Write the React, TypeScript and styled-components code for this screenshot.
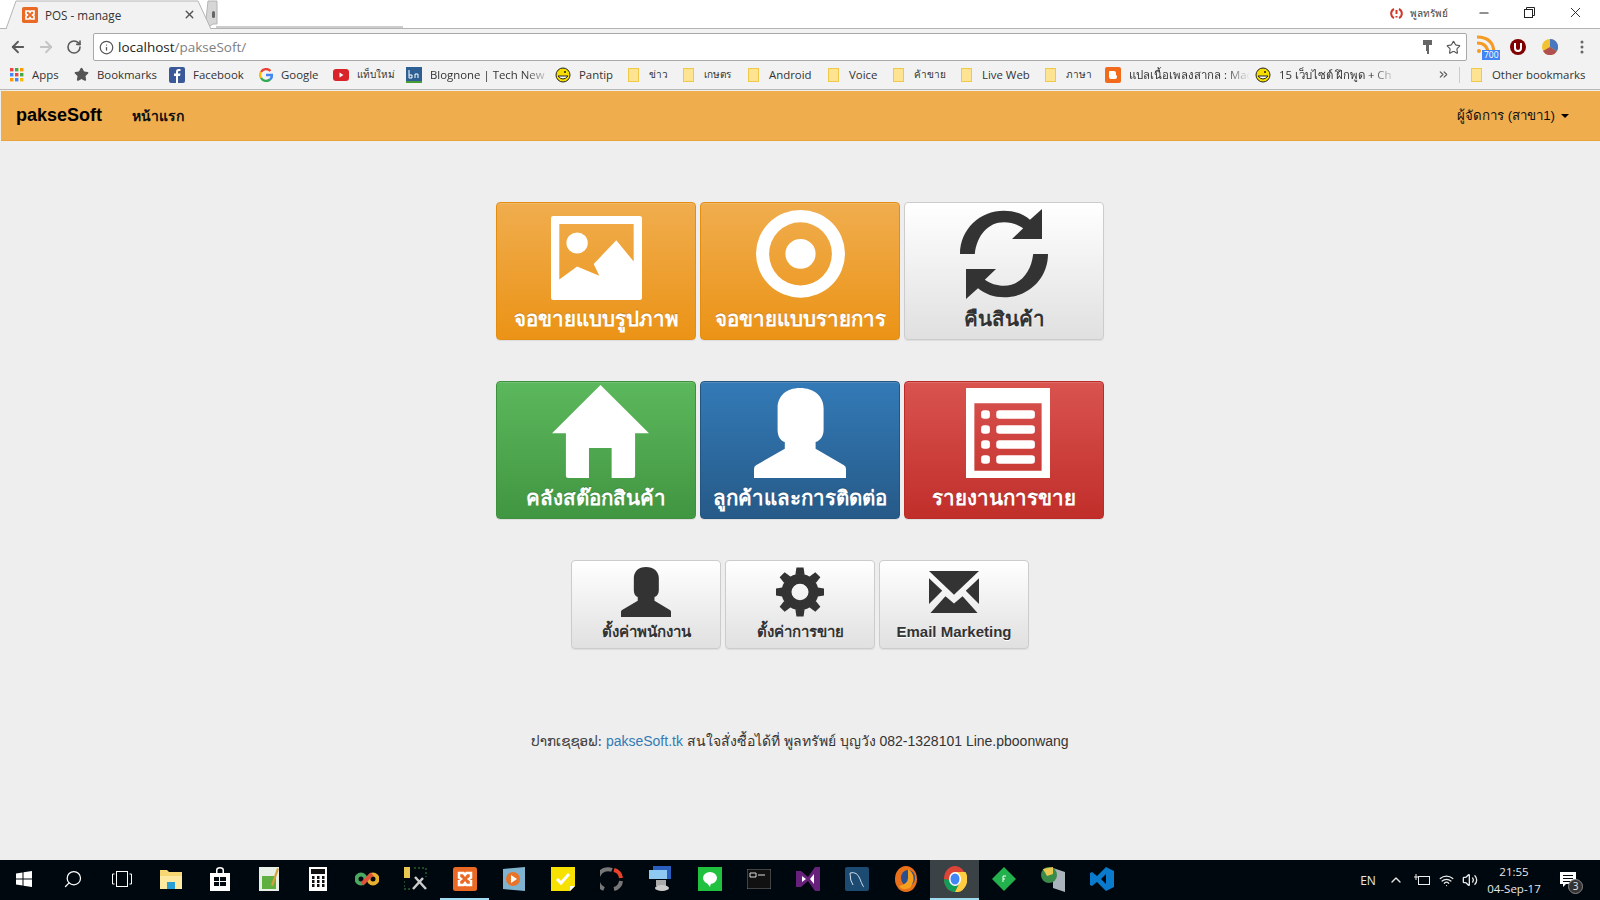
import React from "react";
import styled, { createGlobalStyle, css } from "styled-components";
import { ArrowLeft, ArrowRight, RotateCw, Info, Star, X, Minus, Search, ChevronUp, Volume2, Wifi, ChevronsRight } from "lucide-react";

const GlobalStyle = createGlobalStyle`
  html, body { margin: 0; padding: 0; background: #eee; }
  body { font-family: "Liberation Sans", Arial, sans-serif; font-size: 14px; color: #333; }
  * { box-sizing: border-box; }
`;

const UI_FONT = `"Open Sans", "Noto Sans", "Liberation Sans", sans-serif`;

const Page = styled.div`
  width: 1600px;
  height: 900px;
  display: flex;
  flex-direction: column;
  overflow: hidden;
`;

/* ---- browser chrome ---- */
const TitleBar = styled.div`
  height: 29px;
  background: #fff;
  border-bottom: 1px solid #b4b4b4;
  display: flex;
  align-items: stretch;
  padding: 0 2px 0 5px;
`;
const Tab = styled.div`
  position: relative;
  width: 206px;
  height: 29px;
  display: flex;
  align-items: center;
  padding: 0 15px 0 17px;
  font: 11.7px ${UI_FONT};
  color: #333;
  z-index: 1;
`;
const TabShape = styled.svg`
  position: absolute;
  left: 0;
  top: 0;
`;
const Favicon = styled.div`
  position: relative;
  width: 16px;
  height: 16px;
`;
const TabLabel = styled.span`
  position: relative;
  flex: 1;
  margin-left: 7px;
`;
const TabClose = styled(X)`
  position: relative;
  color: #555;
`;
const GhostTab = styled.div`
  width: 187px;
  height: 28px;
  margin-left: 5px;
  border-bottom: 2px solid #ccc;
`;
const TitleSpacer = styled.div`
  flex: 1;
`;
const UserChip = styled.div`
  display: flex;
  align-items: center;
  gap: 7px;
  font: 10px ${UI_FONT};
  color: #444;
  margin-right: 14px;
  padding-bottom: 2px;
`;
const WinButton = styled.div`
  width: 45.5px;
  display: flex;
  align-items: center;
  justify-content: center;
  color: #222;
  padding-bottom: 3px;
`;

const Toolbar = styled.div`
  height: 32px;
  background: #f2f2f2;
  display: flex;
  align-items: flex-start;
  padding: 4px 0 0 4px;
`;
const NavIcon = styled.div<{ $faded?: boolean }>`
  width: 28px;
  height: 28px;
  display: flex;
  align-items: center;
  justify-content: center;
  color: ${(p) => (p.$faded ? "#c4c4c4" : "#5a5a5a")};
`;
const Omnibox = styled.div`
  width: 1374px;
  height: 28px;
  margin-left: 5px;
  background: #fff;
  border: 1px solid #a9a9a9;
  border-radius: 2px;
  display: flex;
  align-items: center;
  padding: 0 5px 0 5px;
  font: 13.500px ${UI_FONT};
  color: #222;
`;
const Url = styled.span`
  flex: 1;
  margin-left: 4px;
`;
const UrlPath = styled.span`
  color: #808080;
`;
const OmniIcons = styled.div`
  display: flex;
  align-items: center;
  gap: 14px;
  color: #555;
`;
const Extensions = styled.div`
  flex: 1;
  height: 28px;
  display: flex;
  align-items: center;
  padding-left: 3px;
`;
const ExtSlot = styled.div`
  width: 32px;
  display: flex;
  align-items: center;
  justify-content: center;
`;
const RssBadge = styled.div`
  position: relative;
  width: 20px;
  height: 24px;
`;
const Badge = styled.span`
  position: absolute;
  right: -4px;
  bottom: -1px;
  background: #4285f4;
  color: #fff;
  font: 8.500px ${UI_FONT};
  line-height: 10px;
  padding: 0 1.500px;
`;

const BookmarkBar = styled.div`
  height: 29px;
  background: #f2f2f2;
  border-bottom: 1px solid #b8b8b8;
  display: flex;
  align-items: center;
  padding: 0 0 1px 10px;
  font: 11.400px ${UI_FONT};
  color: #333;
`;
const Mark = styled.div<{ $w: number; $fade?: boolean; $tiny?: boolean }>`
  width: ${(p) => p.$w}px;
  flex: none;
  display: flex;
  align-items: center;
  gap: 8px;
  white-space: nowrap;
  overflow: hidden;
  font-size: ${(p) => (p.$tiny ? 10 : 11.4)}px;
  ${(p) =>
    p.$fade &&
    css`
      mask-image: linear-gradient(to right, #000 80%, transparent 97%);
    `}
`;
const FolderGlyph = styled.i`
  flex: none;
  width: 11px;
  height: 14px;
  margin-right: 2px;
  background: #fde392;
  border: 1px solid #f0c948;
`;
const OverflowChevron = styled(ChevronsRight)`
  flex: none;
  margin-left: 36px;
  color: #555;
`;
const Divider = styled.div`
  width: 1px;
  height: 16px;
  background: #ccc;
  margin: 0 11px 0 9px;
`;

/* ---- page navbar ---- */
const Navbar = styled.nav`
  height: 50px;
  margin: 1px 0 0 1px;
  background: #f0ad4e;
  border-bottom: 1px solid #e8a33f;
  display: flex;
  align-items: center;
  color: #111;
  padding: 0 31px 0 15px;
`;
const Brand = styled.a`
  font-size: 18px;
  font-weight: bold;
  color: #000;
`;
const NavLink = styled.a`
  font-size: 14px;
  font-weight: bold;
  margin-left: 30px;
`;
const NavRight = styled.a`
  margin-left: auto;
  display: flex;
  align-items: center;
  gap: 6px;
  font-size: 13.300px;
`;
const Caret = styled.i`
  width: 0;
  height: 0;
  border-top: 4px solid #000;
  border-left: 4px solid transparent;
  border-right: 4px solid transparent;
`;

/* ---- main ---- */
const Main = styled.main`
  flex: 1;
  display: flex;
  flex-direction: column;
  align-items: center;
  padding-top: 61px;
`;
const Row = styled.div<{ $gap: number; $mb: number }>`
  display: flex;
  gap: ${(p) => p.$gap}px;
  margin-bottom: ${(p) => p.$mb}px;
`;

type Tone = "warning" | "success" | "primary" | "danger" | "default";
const tones: Record<Tone, ReturnType<typeof css>> = {
  warning: css`
    background: linear-gradient(#f0ad4e, #eb9316);
    border-color: #e38d13;
  `,
  success: css`
    background: linear-gradient(#5cb85c, #419641);
    border-color: #3e8f3e;
  `,
  primary: css`
    background: linear-gradient(#337ab7, #265a88);
    border-color: #245580;
  `,
  danger: css`
    background: linear-gradient(#d9534f, #c12e2a);
    border-color: #b92c28;
  `,
  default: css`
    background: linear-gradient(#fff, #e0e0e0);
    border-color: #ccc;
    color: #333;
    text-shadow: 0 1px 0 #fff;
  `,
};

const Tile = styled.a<{ $tone: Tone; $small?: boolean }>`
  width: ${(p) => (p.$small ? 149.5 : 200)}px;
  height: ${(p) => (p.$small ? 89 : 138)}px;
  border: 1px solid;
  border-radius: 4px;
  display: flex;
  flex-direction: column;
  align-items: center;
  color: #fff;
  font-weight: bold;
  font-size: ${(p) => (p.$small ? 15 : 20.5)}px;
  text-shadow: 0 -1px 0 rgba(0, 0, 0, 0.2);
  box-shadow: inset 0 1px 0 rgba(255, 255, 255, 0.15), 0 1px 1px rgba(0, 0, 0, 0.075);
  ${(p) => tones[p.$tone]}
`;
const IconSlot = styled.div<{ $small?: boolean; $top: number; $shift?: number }>`
  height: ${(p) => (p.$small ? 60 : 105)}px;
  padding-top: ${(p) => p.$top}px;
  padding-left: ${(p) => p.$shift ?? 0}px;
  display: flex;
  align-items: flex-start;
  justify-content: center;
`;
const TileText = styled.span`
  white-space: nowrap;
  line-height: 22px;
`;

const Footer = styled.p`
  margin: 0;
  margin-top: 82px;
  font-size: 14px;
  line-height: 20px;
`;
const Lao = styled.span`
  font-family: "DejaVu Sans", sans-serif;
  font-size: 13.500px;
  color: #444;
`;
const FooterLink = styled.a`
  color: #337ab7;
`;

/* ---- taskbar ---- */
const Taskbar = styled.div`
  height: 40px;
  margin-left: -1px;
  background: #00080f;
  display: flex;
  align-items: stretch;
  color: #fff;
`;
const TaskItem = styled.div<{ $active?: boolean; $running?: boolean }>`
  width: 49px;
  flex: none;
  display: flex;
  align-items: center;
  justify-content: center;
  background: ${(p) => (p.$active ? "#3a4246" : "transparent")};
  border-bottom: 2px solid ${(p) => (p.$active || p.$running ? "#9fdcf2" : "transparent")};
`;
const SearchGlyph = styled(Search)`
  transform: scaleX(-1);
`;
const Tray = styled.div`
  margin-left: auto;
  display: flex;
  align-items: center;
  font: 12px ${UI_FONT};
  color: #e8e8e8;
`;
const TrayItem = styled.div<{ $w: number }>`
  width: ${(p) => p.$w}px;
  display: flex;
  align-items: center;
  justify-content: center;
`;
const Clock = styled.div`
  width: 68px;
  text-align: center;
  line-height: 17px;
  font-size: 11.500px;
`;
const Notify = styled.div`
  position: relative;
  width: 40px;
  margin-right: 12px;
  display: flex;
  justify-content: center;
`;
const NotifyCount = styled.span`
  position: absolute;
  right: 5px;
  bottom: -6px;
  width: 15px;
  height: 15px;
  border-radius: 50%;
  background: #333;
  border: 1px solid #888;
  font-size: 10px;
  line-height: 13px;
  text-align: center;
`;

/* ---- glyphs ---- */
const PictureIcon = () => (
  <svg width={91} height={84} viewBox="0 0 230 249" fill="#fff" preserveAspectRatio="none">
    <path
      fillRule="evenodd"
      d="M6 0H224Q230 0 230 6V243Q230 249 224 249H6Q0 249 0 243V6Q0 0 6 0ZM21 24V188L66 150L122 177L108 142L165 72L209 135V24ZM39 80A27 31 0 1 0 93 80A27 31 0 1 0 39 80Z"
    />
  </svg>
);
const RecordIcon = () => (
  <svg width={89} height={88} viewBox="0 0 224 265" fill="#fff" preserveAspectRatio="none">
    <path
      fillRule="evenodd"
      d="M0 132A112 132 0 1 0 224 132A112 132 0 1 0 0 132ZM33 132A79 95 0 1 1 191 132A79 95 0 1 1 33 132ZM74 132A38 45 0 1 0 150 132A38 45 0 1 0 74 132Z"
    />
  </svg>
);
const refreshHalf = "M0 135C0 60 50 5 110 5C135 5 158 15 175 32L205 0V90H130L158 58C145 47 128 40 110 40C70 40 42 80 37 135Z";
const RefreshIcon = () => (
  <svg width={88} height={90} viewBox="0 0 220 270" fill="#333" preserveAspectRatio="none">
    <path d={refreshHalf} />
    <path transform="rotate(180 110 135)" d={refreshHalf} />
  </svg>
);
const HomeIcon = () => (
  <svg width={97} height={93} viewBox="0 0 244 278" fill="#fff" preserveAspectRatio="none">
    <path d="M122 0L244 144H209V272Q209 278 203 278H150V188H93V278H41Q35 278 35 272V144H0Z" />
  </svg>
);
const UserIcon = ({ w = 92, h = 90, fill = "#fff" }: { w?: number; h?: number; fill?: string }) => (
  <svg width={w} height={h} viewBox="0 0 230 270" fill={fill} preserveAspectRatio="none">
    <path d="M115 0C150 0 174 25 174 60V125C174 145 165 158 154 162V182L225 232Q230 236 230 242V270H0V242Q0 236 5 232L77 182V162C66 158 59 145 59 125V60C59 25 80 0 115 0Z" />
  </svg>
);
const ListIcon = () => (
  <svg width={84} height={90} viewBox="0 0 211 270" fill="#fff" preserveAspectRatio="none">
    <path
      fillRule="evenodd"
      d="M0 0H211V270H0ZM21 46V248H190V46ZM38 75Q38 67 46 67H52Q60 67 60 75V84Q60 92 52 92H46Q38 92 38 84ZM76 75Q76 67 84 67H165Q173 67 173 75V84Q173 92 165 92H84Q76 92 76 84ZM38 120Q38 112 46 112H52Q60 112 60 120V129Q60 137 52 137H46Q38 137 38 129ZM76 120Q76 112 84 112H165Q173 112 173 120V129Q173 137 165 137H84Q76 137 76 129ZM38 165Q38 157 46 157H52Q60 157 60 165V174Q60 182 52 182H46Q38 182 38 174ZM76 165Q76 157 84 157H165Q173 157 173 165V174Q173 182 165 182H84Q76 182 76 174ZM38 210Q38 202 46 202H52Q60 202 60 210V219Q60 227 52 227H46Q38 227 38 219ZM76 210Q76 202 84 202H165Q173 202 173 210V219Q173 227 165 227H84Q76 227 76 219Z"
    />
  </svg>
);
const CogIcon = () => (
  <svg width={48} height={50} viewBox="0 0 135 145" fill="#333" preserveAspectRatio="none">
    <g transform="translate(67.5 72.5)">
      <circle r="38" fill="none" stroke="#333" strokeWidth="28" />
      {[0, 45, 90, 135, 180, 225, 270, 315].map((a) => (
        <path key={a} transform={`rotate(${a})`} d="M-13 -50L-10 -71H10L13 -50Z" />
      ))}
    </g>
  </svg>
);
const EnvelopeIcon = () => (
  <svg width={50} height={42} viewBox="0 0 140 127" fill="#333" preserveAspectRatio="none">
    <path d="M0 0H140L70 72Z" />
    <path d="M0 22V100L37 60Z" />
    <path d="M140 22V100L103 60Z" />
    <path d="M4 127L46 76L70 98L94 76L136 127Z" />
  </svg>
);
const XamppIcon = ({ size }: { size: number }) => (
  <svg width={size} height={size} viewBox="0 0 24 24">
    <rect width="24" height="24" rx="2.500" fill="#ea6a25" />
    <path d="M6 6H10.500L12 8L13.500 6H18V10.500L16 12L18 13.500V18H13.500L12 16L10.500 18H6V13.500L8 12L6 10.500Z" fill="none" stroke="#fff" strokeWidth="2.500" />
  </svg>
);

const Tile3 = [
  { tone: "warning" as Tone, icon: <PictureIcon />, top: 13, label: "จอขายแบบรูปภาพ" },
  { tone: "warning" as Tone, icon: <RecordIcon />, top: 7, label: "จอขายแบบรายการ" },
  { tone: "default" as Tone, icon: <RefreshIcon />, top: 6, label: "คืนสินค้า" },
];
const Tile4 = [
  { tone: "success" as Tone, icon: <HomeIcon />, top: 3, shift: 8, label: "คลังสต๊อกสินค้า" },
  { tone: "primary" as Tone, icon: <UserIcon />, top: 6, label: "ลูกค้าและการติดต่อ" },
  { tone: "danger" as Tone, icon: <ListIcon />, top: 6, shift: 8, label: "รายงานการขาย" },
];
const Tile5 = [
  { icon: <UserIcon w={50} h={50} fill="#333" />, top: 6, label: "ตั้งค่าพนักงาน" },
  { icon: <CogIcon />, top: 6, label: "ตั้งค่าการขาย" },
  { icon: <EnvelopeIcon />, top: 10, label: "Email Marketing" },
];

const Folder = () => <FolderGlyph />;
const Smile = () => (
  <svg width={16} height={16} viewBox="0 0 16 16">
    <circle cx="8" cy="8" r="7" fill="#f7dc00" stroke="#222" />
    <path d="M3 9Q8 15 13 9Z" fill="#fff" stroke="#222" />
    <circle cx="10" cy="5" r="1" fill="#222" />
  </svg>
);
const Square = ({ c, t }: { c: string; t?: string }) => (
  <svg width={16} height={16} viewBox="0 0 16 16">
    <rect width="16" height="16" rx="2" fill={c} />
    {t && <path d={t} fill="#fff" />}
  </svg>
);
const BlognoneIcon = () => (
  <svg width={16} height={16} viewBox="0 0 16 16">
    <rect width="16" height="16" fill="#2e5f92" />
    <rect y="14" width="16" height="2" fill="#4a9a3a" />
    <path d="M3 3V11H6V8H3M9 11V7H12V11" fill="none" stroke="#fff" />
  </svg>
);

const bookmarks: { w: number; icon: React.ReactNode; label: string; fade?: boolean; tiny?: boolean }[] = [
  { w: 64, icon: (
      <svg width={14} height={14} viewBox="0 0 14 14">
        {[0, 5, 10].flatMap((y, r) =>
          [0, 5, 10].map((x, c) => (
            <rect key={`${r}${c}`} x={x} y={y} width="3.4" height="3.4" fill={["#e44", "#4a4", "#f90", "#48f", "#e44", "#4a4", "#f90", "#48f", "#fb0"][r * 3 + c]} />
          ))
        )}
      </svg>
    ), label: "Apps" },
  { w: 95, icon: <Star size={15} fill="#555" color="#555" />, label: "Bookmarks" },
  { w: 90, icon: <Square c="#3b5998" t="M9 16V9H11L11.5 6.5H9V5Q9 4 10 4H11.5V2H9.500Q7 2 7 5V6.500H5V9H7V16Z" />, label: "Facebook" },
  { w: 74, icon: (
      <svg width={14} height={14} viewBox="0 0 14 14" fill="none" strokeWidth="2.4">
        <path d="M11.500 3A6 6 0 0 0 2 4" stroke="#ea4335" />
        <path d="M2 4A6 6 0 0 0 2 10" stroke="#fbbc05" />
        <path d="M2 10A6 6 0 0 0 11 11.500" stroke="#34a853" />
        <path d="M11 11.500Q13 10 13 7H7" stroke="#4285f4" />
      </svg>
    ), label: "Google" },
  { w: 73, icon: <svg width={16} height={12} viewBox="0 0 16 12"><rect width="16" height="12" rx="3" fill="#d9252a" /><path d="M6.500 3.500L10.500 6L6.500 8.500Z" fill="#fff" /></svg>, label: "แท็บใหม่", tiny: true },
  { w: 149, icon: <BlognoneIcon />, label: "Blognone | Tech New", fade: true },
  { w: 73, icon: <Smile />, label: "Pantip" },
  { w: 55, icon: <Folder />, label: "ข่าว", tiny: true },
  { w: 65, icon: <Folder />, label: "เกษตร", tiny: true },
  { w: 80, icon: <Folder />, label: "Android" },
  { w: 65, icon: <Folder />, label: "Voice" },
  { w: 68, icon: <Folder />, label: "ค้าขาย", tiny: true },
  { w: 84, icon: <Folder />, label: "Live Web" },
  { w: 60, icon: <Folder />, label: "ภาษา", tiny: true },
  { w: 150, icon: <Square c="#f26b1d" t="M5 4H9Q11 4 11 6V8Q12 8 12 10Q12 12 10 12H6Q4 12 4 10V5Q4 4 5 4Z" />, label: "แปลเนื้อเพลงสากล : Mac", fade: true },
  { w: 146, icon: <Smile />, label: "15 เว็บไซต์ ฝึกพูด + Ch", fade: true },
];

const taskIcons: React.ReactNode[] = [
  <svg width={16} height={16} viewBox="0 0 16 16" fill="#fff"><path d="M0 2.500L6.500 1.500V7.500H0ZM7.500 1.300L16 0V7.500H7.500ZM0 8.500H6.500V14.500L0 13.500ZM7.500 8.500H16V16L7.500 14.700Z" /></svg>,
  <SearchGlyph size={20} strokeWidth={1.5} />,
  <svg width={20} height={16} viewBox="0 0 20 16" fill="none" stroke="#fff"><rect x="4.500" y="0.500" width="11" height="15" /><path d="M2.500 3H0.500V13H2.500M17.500 3H19.500V13H17.500" /></svg>,
  <svg width={22} height={24} viewBox="0 0 22 24"><path d="M0 3H7L9 5H22V22H0Z" fill="#f7d774" /><rect y="9" width="22" height="13" fill="#fde9a0" /><rect x="7" y="15" width="8" height="7" fill="#2a9fd6" /></svg>,
  <svg width={20} height={24} viewBox="0 0 20 24" fill="#fff"><path d="M0 6H20V24H0ZM6 6V3Q6 0 10 0Q14 0 14 3V6H12.500V3Q12.500 1.500 10 1.500Q7.500 1.500 7.500 3V6Z" /><path d="M4 10H9V14H4ZM10 10H16V14H10ZM4 15H9V19H4ZM10 15H16V19H10Z" fill="#00080f" /></svg>,
  <svg width={20} height={24} viewBox="0 0 20 24"><rect width="20" height="24" fill="#e8efe6" /><rect x="3" y="9" width="14" height="13" fill="#5fb040" /><path d="M12 18L18 1L20 2L14 19Z" fill="#d8a23a" /></svg>,
  <svg width={18} height={24} viewBox="0 0 18 24"><rect width="18" height="24" fill="#fff" /><rect x="2" y="2" width="14" height="5" fill="#111" />{[9, 13, 17].flatMap((y) => [3, 8, 13].map((x) => <rect key={`${x}${y}`} x={x} y={y} width="2.500" height="3" fill="#111" />))}</svg>,
  <svg width={24} height={16} viewBox="0 0 24 16" fill="none" strokeWidth="4"><circle cx="6" cy="8" r="4.500" stroke="#4aa860" /><circle cx="18" cy="8" r="4.500" stroke="#e8b030" /><path d="M7 13L17 3" stroke="#e0503a" /></svg>,
  <svg width={24} height={24} viewBox="0 0 24 24"><rect width="6" height="11" fill="#e8c850" /><path d="M10 1H22V10M0 14V22H6" fill="none" stroke="#3a8a3a" strokeDasharray="2 2" /><path d="M9 22L19 11M11 10L22 22" stroke="#ccc" strokeWidth="2.500" /></svg>,
  <XamppIcon size={24} />,
  <svg width={22} height={24} viewBox="0 0 22 24"><path d="M0 2L22 0V24L0 22Z" fill="#7fb3d0" /><circle cx="10" cy="12" r="7" fill="#e8742a" /><path d="M8 8L14 12L8 16Z" fill="#fff" /></svg>,
  <svg width={24} height={24} viewBox="0 0 24 24"><path d="M0 0H24V19L19 24H0Z" fill="#f7e100" /><path d="M6 12L10 16L18 7" fill="none" stroke="#fff" strokeWidth="3" /><path d="M19 24V19H24Z" fill="#fff" /></svg>,
  <svg width={24} height={24} viewBox="0 0 24 24" fill="none"><path d="M4 22A10 10 0 0 1 12 3" stroke="#777" strokeWidth="4" /><path d="M14 3A9 9 0 0 1 21 11" stroke="#e8432a" strokeWidth="4" /><path d="M21 14A9 9 0 0 1 14 22" stroke="#777" strokeWidth="4" /></svg>,
  <svg width={24} height={26} viewBox="0 0 24 26"><rect x="4" y="0" width="18" height="13" fill="#2a5fc0" /><rect x="0" y="4" width="18" height="9" fill="#8fc8f0" /><rect x="7" y="14" width="10" height="6" fill="#aaa" /><ellipse cx="13" cy="22" rx="7" ry="3" fill="#ccc" /></svg>,
  <svg width={24} height={24} viewBox="0 0 24 24"><rect width="24" height="24" fill="#1fc13e" /><ellipse cx="12" cy="11" rx="7" ry="6" fill="#fff" /><path d="M9 16L12 20L13 16Z" fill="#fff" /></svg>,
  <svg width={24} height={20} viewBox="0 0 24 20"><rect width="24" height="20" fill="#111" stroke="#777" /><path d="M3 4H9V8H3ZM11 6H18" stroke="#ddd" fill="none" /></svg>,
  <svg width={24} height={24} viewBox="0 0 24 24"><path d="M0 4H5L12 10L19 0H24V24H19L12 14L5 20H0Z" fill="#68217a" /><path d="M6 9L10 12L6 15Z M18 7V17L14 12Z" fill="#fff" /></svg>,
  <svg width={24} height={24} viewBox="0 0 24 24"><rect width="24" height="24" rx="2" fill="#1d4a70" /><path d="M5 6Q12 4 15 12T19 20M5 6Q5 14 8 18" fill="none" stroke="#cde" /></svg>,
  <svg width={24} height={26} viewBox="0 0 24 26"><ellipse cx="12" cy="13" rx="11" ry="13" fill="#e8701a" /><ellipse cx="14" cy="12" rx="7" ry="8" fill="#2a4f90" /><path d="M14 3Q24 10 16 22Q8 25 5 20Q14 18 14 12Z" fill="#f4a01e" /></svg>,
  <svg width={24} height={26} viewBox="0 0 24 26"><ellipse cx="12" cy="13" rx="11" ry="13" fill="#db4437" /><path d="M1 13A11 13 0 0 0 12 26L17 16Z" fill="#0f9d58" /><path d="M12 6H22.500A11 13 0 0 1 12 26L17 16Z" fill="#ffcd40" /><ellipse cx="12" cy="13" rx="6" ry="7" fill="#fff" /><ellipse cx="12" cy="13" rx="4.500" ry="5.500" fill="#4285f4" /></svg>,
  <svg width={24} height={24} viewBox="0 0 24 24"><path d="M12 0L24 12L12 24L0 12Z" fill="#22b14c" /><path d="M11 9H14M11 9V15M11 12H13" stroke="#fff" /></svg>,
  <svg width={24} height={26} viewBox="0 0 24 26"><path d="M12 2L24 6V26L12 22Z" fill="#aab4bc" /><circle cx="8" cy="9" r="8" fill="#3a8a4a" /><path d="M2 3L12 1V8L6 10Z" fill="#e8c850" /></svg>,
  <svg width={24} height={24} viewBox="0 0 24 24"><path d="M16 0L24 4V20L16 24L7 15L2 19L0 18V6L2 5L7 9ZM16 7L11 12L16 17Z" fill="#0a7acc" /></svg>,
];

export default function App() {
  return (
    <Page>
      <GlobalStyle />
      <TitleBar>
        <Tab>
          <TabShape width={216} height={29} viewBox="0 0 216 29">
            <path d="M200 29L203 1H212V24H208Z" fill="#d6d6d6" stroke="#b4b4b4" />
            <rect x="207" y="11" width="3" height="7" rx="1.500" fill="#666" />
            <path d="M1 29L11 1H193L206 29" fill="#f2f2f2" stroke="#b4b4b4" />
          </TabShape>
          <Favicon>
            <XamppIcon size={16} />
          </Favicon>
          <TabLabel>POS - manage</TabLabel>
          <TabClose size={13} strokeWidth={2.5} />
        </Tab>
        <GhostTab />
        <TitleSpacer />
        <UserChip>
          <svg width={13} height={13} viewBox="0 0 13 13" fill="none" stroke="#d0392b" strokeWidth="2">
            <path d="M4 2A5 5 0 0 0 4 11M9 2A5 5 0 0 1 9 11M6.500 3V7M6.500 9V10.500" />
          </svg>
          พูลทรัพย์
        </UserChip>
        <WinButton><Minus size={14} /></WinButton>
        <WinButton>
          <svg width={11} height={11} viewBox="0 0 11 11" fill="none" stroke="#222"><rect x="0.500" y="2.500" width="8" height="8" /><path d="M2.500 2.500V0.500H10.500V8.500H8.500" /></svg>
        </WinButton>
        <WinButton><X size={17} strokeWidth={1.3} /></WinButton>
      </TitleBar>
      <Toolbar>
        <NavIcon><ArrowLeft size={18} strokeWidth={2.4} /></NavIcon>
        <NavIcon $faded><ArrowRight size={18} strokeWidth={2.4} /></NavIcon>
        <NavIcon><RotateCw size={16} strokeWidth={2.4} /></NavIcon>
        <Omnibox>
          <Info size={15} color="#555" />
          <Url>localhost<UrlPath>/pakseSoft/</UrlPath></Url>
          <OmniIcons>
            <svg width={9} height={14} viewBox="0 0 9 14" fill="#666"><path d="M0 0H9V5H6V14H4V11H3V5H0Z" /></svg>
            <Star size={15} strokeWidth={1.8} />
          </OmniIcons>
        </Omnibox>
        <Extensions>
          <ExtSlot>
            <RssBadge>
              <svg width={20} height={20} viewBox="0 0 20 20" fill="none" stroke="#f59a23" strokeWidth="3"><path d="M1 8Q12 8 12 19M1 2Q18 2 18 19" /><circle cx="3" cy="16" r="2" fill="#f59a23" stroke="none" /></svg>
              <Badge>700</Badge>
            </RssBadge>
          </ExtSlot>
          <ExtSlot>
            <svg width={16} height={16} viewBox="0 0 16 16"><circle cx="8" cy="8" r="8" fill="#800000" /><path d="M5 4V9Q5 12 8 12Q11 12 11 9V4" fill="none" stroke="#fff" strokeWidth="2" /></svg>
          </ExtSlot>
          <ExtSlot>
            <svg width={16} height={16} viewBox="0 0 16 16"><circle cx="8" cy="8" r="8" fill="#f1c232" /><path d="M8 8L1 12A8 8 0 0 0 15 12Z" fill="#b05050" /><path d="M8 8V0A8 8 0 0 1 15 12Z" fill="#4a78c0" /></svg>
          </ExtSlot>
          <ExtSlot>
            <svg width={4} height={14} viewBox="0 0 4 14" fill="#666"><circle cx="2" cy="2" r="1.500" /><circle cx="2" cy="7" r="1.500" /><circle cx="2" cy="12" r="1.500" /></svg>
          </ExtSlot>
        </Extensions>
      </Toolbar>
      <BookmarkBar>
        {bookmarks.map((b) => (
          <Mark key={b.label} $w={b.w} $fade={b.fade} $tiny={b.tiny}>
            {b.icon}
            <span>{b.label}</span>
          </Mark>
        ))}
        <OverflowChevron size={13} />
        <Divider />
        <Mark $w={120}>
          <Folder />
          <span>Other bookmarks</span>
        </Mark>
      </BookmarkBar>

      <Navbar>
        <Brand>pakseSoft</Brand>
        <NavLink>หน้าแรก</NavLink>
        <NavRight>
          ผู้จัดการ (สาขา1)
          <Caret />
        </NavRight>
      </Navbar>

      <Main>
        <Row $gap={4} $mb={41}>
          {Tile3.map((t) => (
            <Tile key={t.label} $tone={t.tone}>
              <IconSlot $top={t.top}>{t.icon}</IconSlot>
              <TileText>{t.label}</TileText>
            </Tile>
          ))}
        </Row>
        <Row $gap={4} $mb={41}>
          {Tile4.map((t) => (
            <Tile key={t.label} $tone={t.tone}>
              <IconSlot $top={t.top} $shift={t.shift}>{t.icon}</IconSlot>
              <TileText>{t.label}</TileText>
            </Tile>
          ))}
        </Row>
        <Row $gap={4.5} $mb={0}>
          {Tile5.map((t) => (
            <Tile key={t.label} $tone="default" $small>
              <IconSlot $small $top={t.top}>{t.icon}</IconSlot>
              <TileText>{t.label}</TileText>
            </Tile>
          ))}
        </Row>
        <Footer>
          <Lao>ປາກເຊຊອຟ:</Lao> <FooterLink>pakseSoft.tk</FooterLink> สนใจสั่งซื้อได้ที่ พูลทรัพย์ บุญวัง 082-1328101 Line.pboonwang
        </Footer>
      </Main>

      <Taskbar>
        {taskIcons.map((icon, i) => (
          <TaskItem key={i} $running={i === 9} $active={i === 19}>
            {icon}
          </TaskItem>
        ))}
        <Tray>
          <TrayItem $w={24}>EN</TrayItem>
          <TrayItem $w={32}><ChevronUp size={16} /></TrayItem>
          <TrayItem $w={20}>
            <svg width={16} height={12} viewBox="0 0 16 12" fill="none" stroke="#eee"><rect x="4.500" y="2.500" width="11" height="8" /><path d="M0 3H4M2 0V6" /></svg>
          </TrayItem>
          <TrayItem $w={28}><Wifi size={15} /></TrayItem>
          <TrayItem $w={20}><Volume2 size={16} /></TrayItem>
          <Clock>21:55<br />04-Sep-17</Clock>
          <Notify>
            <svg width={16} height={16} viewBox="0 0 16 16" fill="#fff"><path d="M0 0H16V12H6L3 15V12H0ZM3 3V4H13V3ZM3 6V7H13V6ZM3 9V10H10V9Z" fillRule="evenodd" /></svg>
            <NotifyCount>3</NotifyCount>
          </Notify>
        </Tray>
      </Taskbar>
    </Page>
  );
}
